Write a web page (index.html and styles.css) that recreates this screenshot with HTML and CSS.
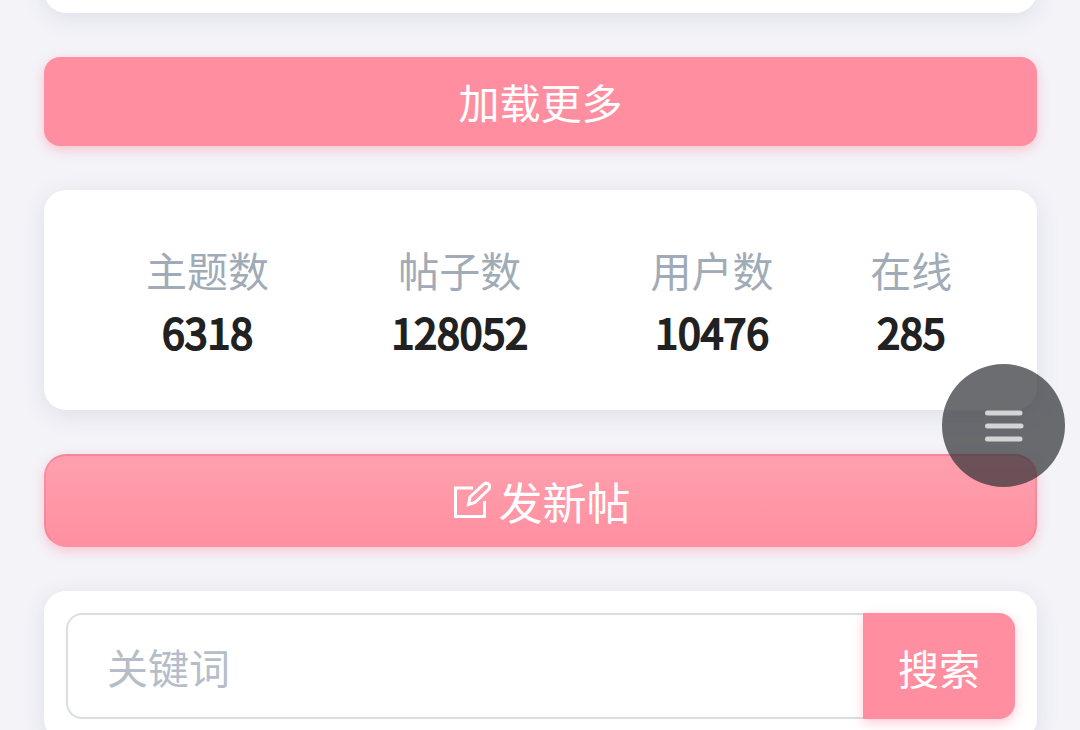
FILE: index.html
```html
<!DOCTYPE html>
<html lang="zh-CN">

<head>
    <meta charset="UTF-8">
    <meta name="viewport" content="width=device-width, initial-scale=1.0">
    <title>论坛</title>
    <link rel="stylesheet" href="styles.css">
</head>

<body>
    <main class="page">
        <div class="card card-end"></div>

        <button type="button" class="btn btn-more">加载更多</button>

        <section class="card stats">
            <table>
                <thead>
                    <tr>
                        <th scope="col">主题数</th>
                        <th scope="col">帖子数</th>
                        <th scope="col">用户数</th>
                        <th scope="col">在线</th>
                    </tr>
                </thead>
                <tbody>
                    <tr>
                        <td>6318</td>
                        <td>128052</td>
                        <td>10476</td>
                        <td>285</td>
                    </tr>
                </tbody>
            </table>
        </section>

        <button type="button" class="btn btn-post">
            <svg class="icon-edit" viewBox="0 0 40 40" aria-hidden="true">
                <path d="M22 7H4.500V35.500H33.500V20" />
                <path d="M17.500 23.500L19 16L33 3Q36 1 38 3.500Q39.500 6 37.500 8.500L24 21.500Z" />
            </svg>
            <span>发新帖</span>
        </button>

        <form class="card search">
            <input type="text" name="keyword" placeholder="关键词" aria-label="关键词">
            <button type="submit" class="btn btn-search">搜索</button>
        </form>
    </main>

    <button type="button" class="fab" aria-label="菜单">
        <svg viewBox="0 0 40 40" aria-hidden="true">
            <path d="M3.500 7H36M3.500 20H37M3.500 33H36" />
        </svg>
    </button>
</body>

</html>
```

FILE: styles.css
```css
* {
    margin: 0;
    padding: 0;
    box-sizing: border-box;
}

body {
    background-color: #f3f3f8;
    color: #212121;
    overflow: hidden;
}

body,
button,
input {
    font-family: "Noto Sans CJK SC", sans-serif;
    font-size: 41px;
    line-height: 60px;
}

.page {
    display: flex;
    flex-direction: column;
    gap: 44px;
    padding: 0 43px 44px 44px;
    overflow: hidden;
}

.card {
    background-color: #fff;
    border-radius: 22px;
    box-shadow: 0 5px 24px rgba(60, 80, 100, 0.11);
}

/* tail of the topic list */
.card-end {
    height: 60px;
    margin-top: -47px;
}

.btn {
    border: none;
    border-radius: 16px;
    color: #fff;
    background-color: #ff8fa0;
    box-shadow: 0 4px 12px rgba(255, 143, 160, 0.45);
    cursor: pointer;
}

.btn-more {
    padding: 14px 0 15px;
}

.stats {
    padding: 49px 46px 49px 44px;
}

.stats table {
    width: 100%;
    border-collapse: collapse;
    text-align: center;
}

.stats th {
    color: #a0abb7;
    font-weight: normal;
}

.stats td {
    padding-top: 2px;
    -webkit-text-stroke: 2px #212121;
}

.btn-post {
    display: flex;
    justify-content: center;
    align-items: center;
    gap: 8px;
    height: 93px;
    border: 2px solid rgba(220, 100, 130, 0.25);
    border-top-color: rgba(220, 100, 130, 0.4);
    border-bottom-color: transparent;
    border-radius: 22px;
    background: linear-gradient(#ffa0ae, #ff8fa0) border-box;
    font-size: 44px;
}

.icon-edit {
    width: 40px;
    height: 40px;
    fill: none;
    stroke: #fff;
    stroke-width: 3;
}

.search {
    display: flex;
    padding: 22px;
}

.search input {
    flex: 1;
    min-width: 0;
    height: 106px;
    padding: 0 39px;
    border: 2px solid #dadee2;
    border-right: none;
    border-radius: 16px 0 0 16px;
    outline: none;
    color: #212121;
}

.search input::placeholder {
    color: #b5bec8;
}

.btn-search {
    padding: 2px 35px 0;
    border-radius: 0 16px 16px 0;
}

.fab {
    position: fixed;
    right: 15px;
    top: 364px;
    display: flex;
    justify-content: center;
    align-items: center;
    width: 123px;
    height: 123px;
    border: none;
    border-radius: 50%;
    background-color: rgba(47, 49, 54, 0.71);
    cursor: pointer;
}

.fab svg {
    width: 40px;
    height: 40px;
    fill: none;
    stroke: #d3d4d6;
    stroke-width: 5;
    stroke-linecap: round;
}
```
